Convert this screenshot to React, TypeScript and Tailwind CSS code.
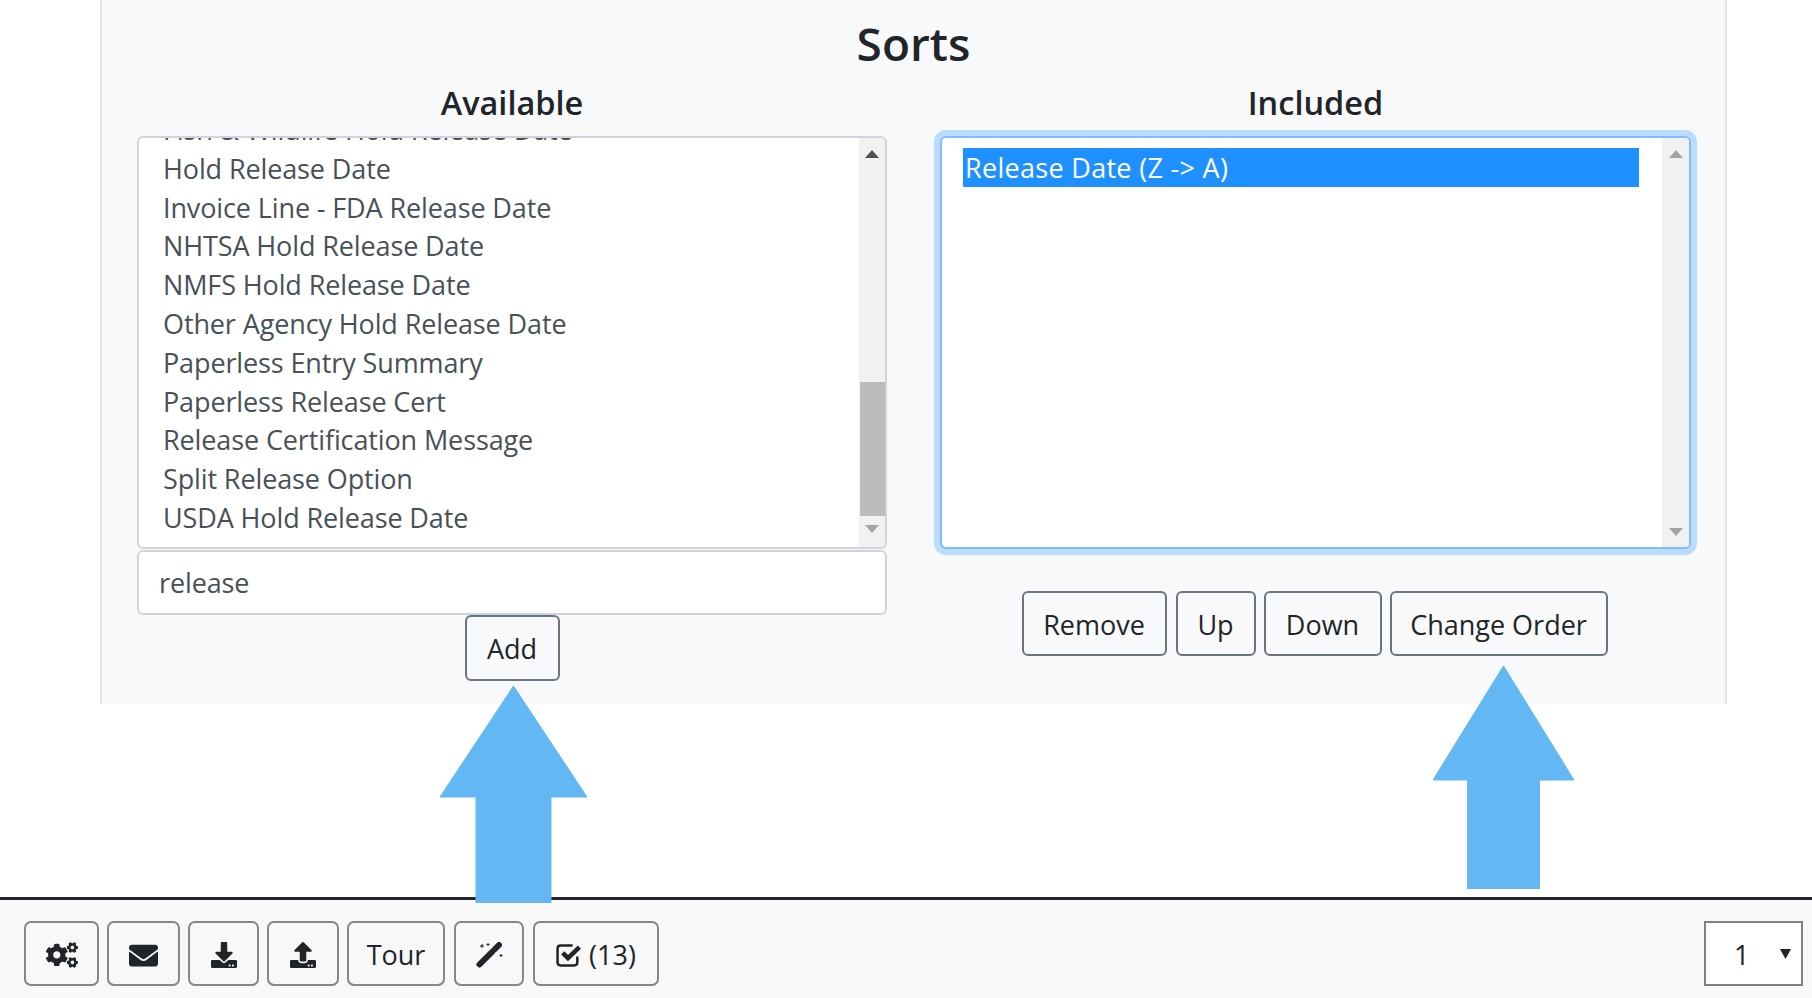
import React from 'react';
import { FaCogs, FaEnvelope, FaDownload, FaUpload } from 'react-icons/fa';

const availableSorts = [
  'Hold Release Date',
  'Invoice Line - FDA Release Date',
  'NHTSA Hold Release Date',
  'NMFS Hold Release Date',
  'Other Agency Hold Release Date',
  'Paperless Entry Summary',
  'Paperless Release Cert',
  'Release Certification Message',
  'Split Release Option',
  'USDA Hold Release Date',
];

const outlineBtn =
  'rounded-[6px] border-2 border-[#6c757d] pt-[3px] text-[27px] text-[#212529] flex items-center justify-center';
const toolBtn =
  'h-[65px] rounded-[7px] border-2 border-[#868686] pt-[3px] text-[27px] text-[#212529] flex items-center justify-center';

const ScrollArrow = ({ up, dark }: { up?: boolean; dark?: boolean }) => (
  <svg width="14" height="8" viewBox="0 0 14 8" className={up ? '' : 'rotate-180'}>
    <path d="M7 0L14 8H0Z" fill={dark ? '#505050' : '#a3a3a3'} />
  </svg>
);

const BigArrow = ({ className }: { className: string }) => (
  <svg viewBox="0 0 147 217" className={className} preserveAspectRatio="none">
    <path d="M73.5 0L147 111H111V217H36V111H0Z" fill="#63b8f3" stroke="#63b8f3" strokeWidth="1" strokeLinejoin="round" />
  </svg>
);

// FA4 style wand, the FA5 one in react-icons has big stars
const WandIcon = () => (
  <svg width="27" height="26" viewBox="0 0 27 26" fill="none">
    <path d="M3.5 22.5L16 10" stroke="#212529" strokeWidth="6" strokeLinecap="round" />
    <path d="M18.5 7.5L23 3" stroke="#212529" strokeWidth="6" strokeLinecap="round" />
    <path d="M6 2V6M4 4H8M12 1V4M10.5 2.5H13.5M25 12V15M23.5 13.5H26.5" stroke="#212529" strokeWidth="1" />
  </svg>
);

const CheckBoxIcon = () => (
  <svg width="26" height="23" viewBox="0 0 25 22" fill="none">
    <path
      d="M20.5 12V17.5C20.5 19.2 19.2 20.5 17.5 20.5H4.5C2.8 20.5 1.5 19.2 1.5 17.5V4.5C1.5 2.8 2.8 1.5 4.5 1.5H16"
      stroke="#212529"
      strokeWidth="2.4"
    />
    <path d="M6.5 8.5L11.5 13.5L22.5 3" stroke="#212529" strokeWidth="4.4" />
  </svg>
);

export default function App() {
  return (
    <div
      className="relative h-[998px] w-[1812px] overflow-hidden bg-white flex flex-col text-[#212529]"
      style={{ fontFamily: '"Open Sans", "Noto Sans", sans-serif' }}
    >
      {/* Sorts panel */}
      <div className="mx-[100px] h-[704px] w-[1627px] border-x-2 border-[#e3e5e8] bg-[#f8f9fa] flex flex-col">
        <h2 className="h-[88px] pt-[13px] text-center text-[46px] leading-[60px] font-semibold">Sorts</h2>
        <div className="flex pl-[35px]">
          {/* Available */}
          <div className="w-[750px] flex flex-col items-center">
            <h4 className="h-[48px] text-[32.5px] leading-[30px] font-semibold text-center">Available</h4>
            <div className="w-full h-[413px] flex rounded-[6px] border-2 border-[#ced4da] bg-white overflow-hidden">
              <div className="flex-1 overflow-hidden pl-[24px] text-[27px] tracking-[-0.12px] leading-[38.8px] text-[#495057]">
                <div className="-mt-[27px]">
                  <div>Fish &amp; Wildlife Hold Release Date</div>
                  {availableSorts.map((s) => (
                    <div key={s}>{s}</div>
                  ))}
                </div>
              </div>
              <div className="w-[26px] bg-[#f1f1f1] flex flex-col items-center">
                <div className="h-[244px] pt-[12px]"><ScrollArrow up dark /></div>
                <div className="w-[25px] h-[134px] bg-[#bcbcbc]" />
                <div className="pt-[9px]"><ScrollArrow /></div>
              </div>
            </div>
            <div className="w-full h-[65px] mt-[1px] rounded-[6px] border-2 border-[#ced4da] bg-white pl-[20px] pt-[2px] flex items-center text-[27px] tracking-[-0.12px] text-[#495057]">
              release
            </div>
            <button className={`${outlineBtn} h-[66px] w-[95px]`}>Add</button>
          </div>

          {/* Included */}
          <div className="ml-[53px] w-[751px] flex flex-col items-center">
            <h4 className="h-[48px] text-[32.5px] leading-[30px] font-semibold text-center">Included</h4>
            <div className="w-full h-[413px] flex rounded-[6px] border-2 border-[#80bdff] ring-[6px] ring-[#b9dcff] bg-white overflow-hidden">
              <div className="flex-1 pt-[10px] pl-[21px] pr-[23px] text-[27px] tracking-[0.3px] leading-[39px]">
                <div className="bg-[#1e90ff] text-white pl-[2px]">Release Date (Z -&gt; A)</div>
              </div>
              <div className="w-[27px] bg-[#f1f1f1] flex flex-col justify-between items-center pt-[12px] pb-[11px]">
                <ScrollArrow up />
                <ScrollArrow />
              </div>
            </div>
            <div className="mt-[42px] mr-[2px] flex">
              <button className={`${outlineBtn} h-[65px] w-[145px]`}>Remove</button>
              <button className={`${outlineBtn} h-[65px] w-[80px] ml-[9px]`}>Up</button>
              <button className={`${outlineBtn} h-[65px] w-[118px] ml-[8px]`}>Down</button>
              <button className={`${outlineBtn} h-[65px] w-[218px] ml-[8px]`}>Change Order</button>
            </div>
          </div>
        </div>
      </div>

      <div className="flex-1" />

      {/* Bottom toolbar */}
      <div className="h-[101px] border-t-[3px] border-[#212529] bg-[#f8f8f8] flex items-start pt-[21px] pl-[24px] pr-[9px]">
        <button className={`${toolBtn} w-[75px]`}><FaCogs size={32} /></button>
        <button className={`${toolBtn} w-[73px] ml-[8px]`}><FaEnvelope size={29} /></button>
        <button className={`${toolBtn} w-[71px] ml-[8px]`}><FaDownload size={26} /></button>
        <button className={`${toolBtn} w-[72px] ml-[8px]`}><FaUpload size={26} /></button>
        <button className={`${toolBtn} w-[98px] ml-[8px]`}>Tour</button>
        <button className={`${toolBtn} w-[70px] ml-[9px]`}><WandIcon /></button>
        <button className={`${toolBtn} w-[126px] ml-[9px] gap-[7px]`}><CheckBoxIcon />(13)</button>
        <div className="ml-auto relative h-[65px] w-[99px] border-2 border-[#808080] bg-white pt-[3px] text-[27px] flex items-center pl-[28px]">
          1
          <svg width="11" height="10" viewBox="0 0 11 10" className="absolute right-[10px] top-[26px]">
            <path d="M0 0H11L5.5 10Z" fill="#212529" />
          </svg>
        </div>
      </div>

      {/* Annotation arrows */}
      <BigArrow className="absolute left-[440px] top-[686px] w-[147px] h-[217px]" />
      <BigArrow className="absolute left-[1433px] top-[666px] w-[141px] h-[223px]" />
    </div>
  );
}
